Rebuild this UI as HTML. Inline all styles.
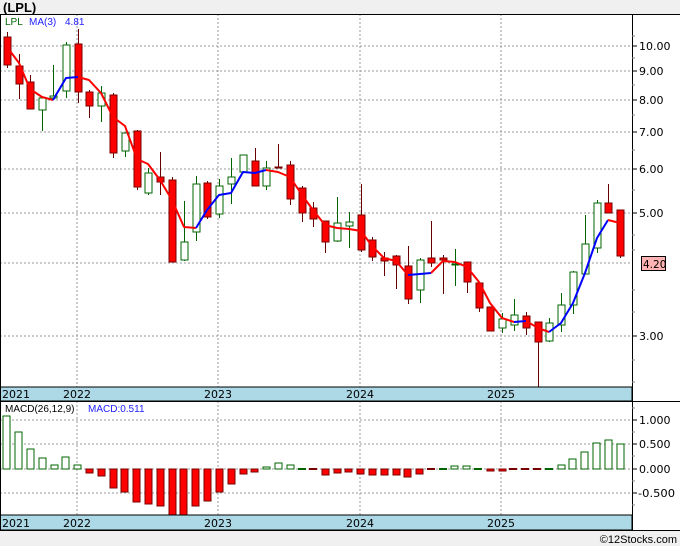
<!DOCTYPE html>
<html><head><meta charset="utf-8"><style>
html,body{margin:0;padding:0;background:#f0f0f0;}
svg{display:block;font-family:"Liberation Sans",sans-serif;}
</style></head><body>
<svg width="680" height="546" viewBox="0 0 680 546" xmlns="http://www.w3.org/2000/svg">
<rect x="0" y="0" width="680" height="546" fill="#f0f0f0"/>
<text x="3" y="12" font-size="13" font-weight="bold" fill="#000">(LPL)</text>
<rect x="0" y="14" width="680" height="517" fill="#fff"/>
<g stroke="#999" stroke-width="1" stroke-dasharray="2,2">
<line x1="0" y1="46" x2="632" y2="46"/><line x1="0" y1="71" x2="632" y2="71"/><line x1="0" y1="100" x2="632" y2="100"/><line x1="0" y1="132" x2="632" y2="132"/><line x1="0" y1="169" x2="632" y2="169"/><line x1="0" y1="213" x2="632" y2="213"/><line x1="0" y1="263" x2="632" y2="263"/><line x1="0" y1="336" x2="632" y2="336"/>
<line x1="77" y1="14" x2="77" y2="387"/><line x1="218" y1="14" x2="218" y2="387"/><line x1="360" y1="14" x2="360" y2="387"/><line x1="501" y1="14" x2="501" y2="387"/>
<line x1="0" y1="420" x2="632" y2="420"/><line x1="0" y1="444" x2="632" y2="444"/><line x1="0" y1="469" x2="632" y2="469"/><line x1="0" y1="493" x2="632" y2="493"/>
<line x1="77" y1="401" x2="77" y2="515"/><line x1="218" y1="401" x2="218" y2="515"/><line x1="360" y1="401" x2="360" y2="515"/><line x1="501" y1="401" x2="501" y2="515"/>
</g>
<text x="5" y="25" font-size="10" fill="#006400">LPL</text>
<text x="29" y="25" font-size="10" fill="#2020ff">MA(3)</text>
<text x="65" y="25" font-size="10" fill="#2020ff">4.81</text>
<g stroke-width="1">
<g stroke="#600"><line x1="7.5" y1="32" x2="7.5" y2="68"/><line x1="19.5" y1="54" x2="19.5" y2="99"/><line x1="30.5" y1="75" x2="30.5" y2="109"/><line x1="78.5" y1="29" x2="78.5" y2="103"/><line x1="89.5" y1="90" x2="89.5" y2="118"/><line x1="113.5" y1="93" x2="113.5" y2="158"/><line x1="137.5" y1="130" x2="137.5" y2="190"/><line x1="160.5" y1="152" x2="160.5" y2="195"/><line x1="172.5" y1="177" x2="172.5" y2="262"/><line x1="207.5" y1="181" x2="207.5" y2="219"/><line x1="255.5" y1="148" x2="255.5" y2="186"/><line x1="278.5" y1="144" x2="278.5" y2="168"/><line x1="290.5" y1="161" x2="290.5" y2="205"/><line x1="302.5" y1="186" x2="302.5" y2="222"/><line x1="313.5" y1="202" x2="313.5" y2="227"/><line x1="325.5" y1="221" x2="325.5" y2="253"/><line x1="361.5" y1="184" x2="361.5" y2="252"/><line x1="372.5" y1="237" x2="372.5" y2="261"/><line x1="384.5" y1="252" x2="384.5" y2="276"/><line x1="396.5" y1="255" x2="396.5" y2="289"/><line x1="408.5" y1="246" x2="408.5" y2="304"/><line x1="431.5" y1="221" x2="431.5" y2="267"/><line x1="443.5" y1="255" x2="443.5" y2="294"/><line x1="467.5" y1="262" x2="467.5" y2="293"/><line x1="479.5" y1="283" x2="479.5" y2="312"/><line x1="490.5" y1="307" x2="490.5" y2="331"/><line x1="526.5" y1="312" x2="526.5" y2="335"/><line x1="538.5" y1="322" x2="538.5" y2="387"/><line x1="608.5" y1="184" x2="608.5" y2="213"/><line x1="620.5" y1="210" x2="620.5" y2="258"/></g>
<g stroke="#006400"><line x1="42.5" y1="98" x2="42.5" y2="131"/><line x1="53.5" y1="65" x2="53.5" y2="100"/><line x1="66.5" y1="42" x2="66.5" y2="98"/><line x1="101.5" y1="86" x2="101.5" y2="122"/><line x1="125.5" y1="133" x2="125.5" y2="157"/><line x1="148.5" y1="168" x2="148.5" y2="195"/><line x1="184.5" y1="201" x2="184.5" y2="261"/><line x1="196.5" y1="176" x2="196.5" y2="241"/><line x1="219.5" y1="179" x2="219.5" y2="218"/><line x1="231.5" y1="158" x2="231.5" y2="204"/><line x1="243.5" y1="155" x2="243.5" y2="172"/><line x1="266.5" y1="161" x2="266.5" y2="190"/><line x1="337.5" y1="197" x2="337.5" y2="242"/><line x1="349.5" y1="212" x2="349.5" y2="248"/><line x1="420.5" y1="258" x2="420.5" y2="303"/><line x1="455.5" y1="249" x2="455.5" y2="286"/><line x1="502.5" y1="313" x2="502.5" y2="333"/><line x1="514.5" y1="299" x2="514.5" y2="331"/><line x1="549.5" y1="318" x2="549.5" y2="342"/><line x1="561.5" y1="293" x2="561.5" y2="332"/><line x1="573.5" y1="271" x2="573.5" y2="314"/><line x1="585.5" y1="215" x2="585.5" y2="274"/><line x1="597.5" y1="200" x2="597.5" y2="253"/></g>
<g fill="#f00" stroke="#700">
<rect x="4" y="37" width="7" height="28"/><rect x="16" y="66" width="7" height="18"/><rect x="27" y="82" width="7" height="27"/><rect x="75" y="44" width="7" height="48"/><rect x="86" y="92" width="7" height="14"/><rect x="110" y="95" width="7" height="58"/><rect x="134" y="131" width="7" height="56"/><rect x="157" y="177" width="7" height="5"/><rect x="169" y="180" width="7" height="82"/><rect x="204" y="183" width="7" height="34"/><rect x="252" y="161" width="7" height="25"/><rect x="275" y="167" width="7" height="1"/><rect x="287" y="165" width="7" height="34"/><rect x="299" y="188" width="7" height="25"/><rect x="310" y="208" width="7" height="11"/><rect x="322" y="221" width="7" height="21"/><rect x="358" y="215" width="7" height="35"/><rect x="369" y="240" width="7" height="17"/><rect x="381" y="258" width="7" height="3"/><rect x="393" y="256" width="7" height="9"/><rect x="405" y="266" width="7" height="33"/><rect x="428" y="258" width="7" height="5"/><rect x="440" y="258" width="7" height="2"/><rect x="464" y="262" width="7" height="20"/><rect x="476" y="283" width="7" height="25"/><rect x="487" y="307" width="7" height="24"/><rect x="523" y="316" width="7" height="12"/><rect x="535" y="322" width="7" height="20"/><rect x="605" y="203" width="7" height="10"/><rect x="617" y="210" width="7" height="46"/>
</g>
<g fill="#fff" stroke="#006400">
<rect x="39" y="98" width="7" height="12"/><rect x="50" y="96" width="7" height="2"/><rect x="63" y="45" width="7" height="46"/><rect x="98" y="93" width="7" height="13"/><rect x="122" y="133" width="7" height="18"/><rect x="145" y="173" width="7" height="20"/><rect x="181" y="242" width="7" height="18"/><rect x="193" y="184" width="7" height="48"/><rect x="216" y="186" width="7" height="28"/><rect x="228" y="177" width="7" height="7"/><rect x="240" y="155" width="7" height="17"/><rect x="263" y="168" width="7" height="18"/><rect x="334" y="223" width="7" height="18"/><rect x="346" y="222" width="7" height="4"/><rect x="417" y="260" width="7" height="30"/><rect x="452" y="264" width="7" height="1"/><rect x="499" y="319" width="7" height="9"/><rect x="511" y="315" width="7" height="10"/><rect x="546" y="323" width="7" height="18"/><rect x="558" y="305" width="7" height="20"/><rect x="570" y="272" width="7" height="33"/><rect x="582" y="244" width="7" height="30"/><rect x="594" y="203" width="7" height="45"/>
</g>
</g>
<g fill="none" stroke-width="2" stroke-linejoin="round">
<polyline stroke="#f00" points="10,51 19,63 30,89 42,97 53,100"/>
<polyline stroke="#00f" points="53,100 66,78 78,77"/>
<polyline stroke="#f00" points="78,77 89,80 101,93 113,117 125,126 137,159 148,164 160,180 172,200 184,227 196,228"/>
<polyline stroke="#00f" points="196,228 207,210 219,195 231,193 243,172 255,173 266,170"/>
<polyline stroke="#f00" points="266,170 278,172 290,177 302,195 313,210 325,225 337,228 349,229 361,231 372,246 384,258 396,261 408,275"/>
<polyline stroke="#00f" points="408,275 420,274 431,273"/>
<polyline stroke="#f00" points="431,273 443,261 455,262 467,267 479,282 490,303 502,318 514,322"/>
<polyline stroke="#00f" points="514,322 526,321"/>
<polyline stroke="#f00" points="526,321 538,328 549,332"/>
<polyline stroke="#00f" points="549,332 561,323 573,303 585,273 597,238 608,220"/>
<polyline stroke="#f00" points="608,220 620,223"/>
</g>
<rect x="0" y="387" width="632" height="14" fill="#add8e6" stroke="#000"/>
<g font-size="11" fill="#000" font-family="'DejaVu Sans',sans-serif"><text x="2" y="398">2021</text><text x="63" y="398">2022</text><text x="204" y="398">2023</text><text x="346" y="398">2024</text><text x="487" y="398">2025</text></g>
<text x="5" y="412" font-size="10" fill="#000">MACD(26,12,9)</text>
<text x="88" y="412" font-size="10" fill="#2020ff">MACD:0.511</text>
<g fill="#fff" stroke="#006400">
<rect x="3" y="416" width="7" height="53"/><rect x="15" y="432" width="7" height="37"/><rect x="27" y="449" width="7" height="20"/><rect x="39" y="458" width="7" height="11"/><rect x="51" y="465" width="7" height="4"/><rect x="62" y="457" width="7" height="12"/><rect x="74" y="465" width="7" height="4"/><rect x="263" y="467" width="7" height="2"/><rect x="275" y="463" width="7" height="6"/><rect x="287" y="465" width="7" height="4"/><rect x="451" y="466" width="7" height="3"/><rect x="463" y="466" width="7" height="3"/><rect x="558" y="465" width="7" height="4"/><rect x="569" y="459" width="7" height="10"/><rect x="581" y="452" width="7" height="17"/><rect x="593" y="443" width="7" height="26"/><rect x="605" y="440" width="7" height="29"/><rect x="617" y="444" width="7" height="25"/>
</g>
<g fill="#006400"><rect x="298" y="468" width="8" height="2"/><rect x="439" y="468" width="8" height="2"/><rect x="474" y="468" width="8" height="2"/><rect x="545" y="468" width="8" height="2"/></g>
<g fill="#700"><rect x="309" y="468" width="8" height="2"/><rect x="427" y="468" width="8" height="2"/><rect x="509" y="468" width="8" height="2"/><rect x="521" y="468" width="8" height="2"/><rect x="533" y="468" width="8" height="2"/></g>
<g fill="#f00" stroke="#700">
<rect x="86" y="469" width="7" height="4"/><rect x="98" y="469" width="7" height="7"/><rect x="110" y="469" width="7" height="19"/><rect x="121" y="469" width="7" height="23"/><rect x="133" y="469" width="7" height="33"/><rect x="145" y="469" width="7" height="35"/><rect x="157" y="469" width="7" height="37"/><rect x="169" y="469" width="7" height="46"/><rect x="180" y="469" width="7" height="46"/><rect x="192" y="469" width="7" height="37"/><rect x="204" y="469" width="7" height="32"/><rect x="216" y="469" width="7" height="23"/><rect x="228" y="469" width="7" height="15"/><rect x="240" y="469" width="7" height="5"/><rect x="251" y="469" width="7" height="3"/>
<rect x="322" y="469" width="7" height="6"/><rect x="334" y="469" width="7" height="4"/><rect x="345" y="469" width="7" height="3"/><rect x="357" y="469" width="7" height="5"/><rect x="369" y="469" width="7" height="6"/><rect x="381" y="469" width="7" height="6"/><rect x="393" y="469" width="7" height="6"/><rect x="404" y="469" width="7" height="8"/><rect x="416" y="469" width="7" height="5"/><rect x="487" y="469" width="7" height="2"/><rect x="499" y="469" width="7" height="2"/>
</g>
<rect x="0" y="515" width="632" height="15" fill="#add8e6" stroke="#000"/>
<g font-size="11" fill="#000" font-family="'DejaVu Sans',sans-serif"><text x="2" y="527">2021</text><text x="63" y="527">2022</text><text x="204" y="527">2023</text><text x="346" y="527">2024</text><text x="487" y="527">2025</text></g>
<g stroke="#000" stroke-width="1" fill="none">
<line x1="0.5" y1="14" x2="0.5" y2="531"/>
<line x1="632.5" y1="14" x2="632.5" y2="531"/>
<line x1="0" y1="14.5" x2="680" y2="14.5"/>
<line x1="0" y1="401.5" x2="680" y2="401.5"/>
<line x1="0" y1="530.5" x2="680" y2="530.5"/>
</g>
<g stroke="#000">
<line x1="632" y1="46" x2="637" y2="46"/><line x1="632" y1="71" x2="637" y2="71"/><line x1="632" y1="100" x2="637" y2="100"/><line x1="632" y1="132" x2="637" y2="132"/><line x1="632" y1="169" x2="637" y2="169"/><line x1="632" y1="213" x2="637" y2="213"/><line x1="632" y1="336" x2="637" y2="336"/>
<line x1="632" y1="420" x2="637" y2="420"/><line x1="632" y1="444" x2="637" y2="444"/><line x1="632" y1="469" x2="637" y2="469"/><line x1="632" y1="493" x2="637" y2="493"/>
</g>
<g stroke="#888">
<line x1="632" y1="36" x2="635" y2="36"/><line x1="632" y1="58" x2="635" y2="58"/><line x1="632" y1="85" x2="635" y2="85"/><line x1="632" y1="115" x2="635" y2="115"/><line x1="632" y1="150" x2="635" y2="150"/><line x1="632" y1="190" x2="635" y2="190"/><line x1="632" y1="235" x2="635" y2="235"/><line x1="632" y1="250" x2="635" y2="250"/><line x1="632" y1="290" x2="635" y2="290"/><line x1="632" y1="312" x2="635" y2="312"/><line x1="632" y1="360" x2="635" y2="360"/><line x1="632" y1="382" x2="635" y2="382"/>
<line x1="632" y1="408" x2="635" y2="408"/><line x1="632" y1="432" x2="635" y2="432"/><line x1="632" y1="456" x2="635" y2="456"/><line x1="632" y1="481" x2="635" y2="481"/><line x1="632" y1="505" x2="635" y2="505"/>
</g>
<g font-size="11" fill="#000" font-family="'DejaVu Sans',sans-serif">
<text x="639" y="50">10.00</text><text x="639" y="75">9.00</text><text x="639" y="104">8.00</text><text x="639" y="136">7.00</text><text x="639" y="173">6.00</text><text x="639" y="217">5.00</text><text x="639" y="340">3.00</text>
<text x="639" y="424">1.000</text><text x="639" y="448">0.500</text><text x="639" y="473">0.000</text><text x="638" y="497" textLength="37" lengthAdjust="spacingAndGlyphs">-0.500</text>
</g>
<rect x="641.5" y="256.5" width="24" height="14" fill="#ffb3b3" stroke="#000"/>
<text x="643" y="268" font-size="10.5" fill="#000" font-family="'DejaVu Sans',sans-serif">4.20</text>
<text x="677" y="543" font-size="11" fill="#000" text-anchor="end">©12Stocks.com</text>
</svg>
</body></html>
